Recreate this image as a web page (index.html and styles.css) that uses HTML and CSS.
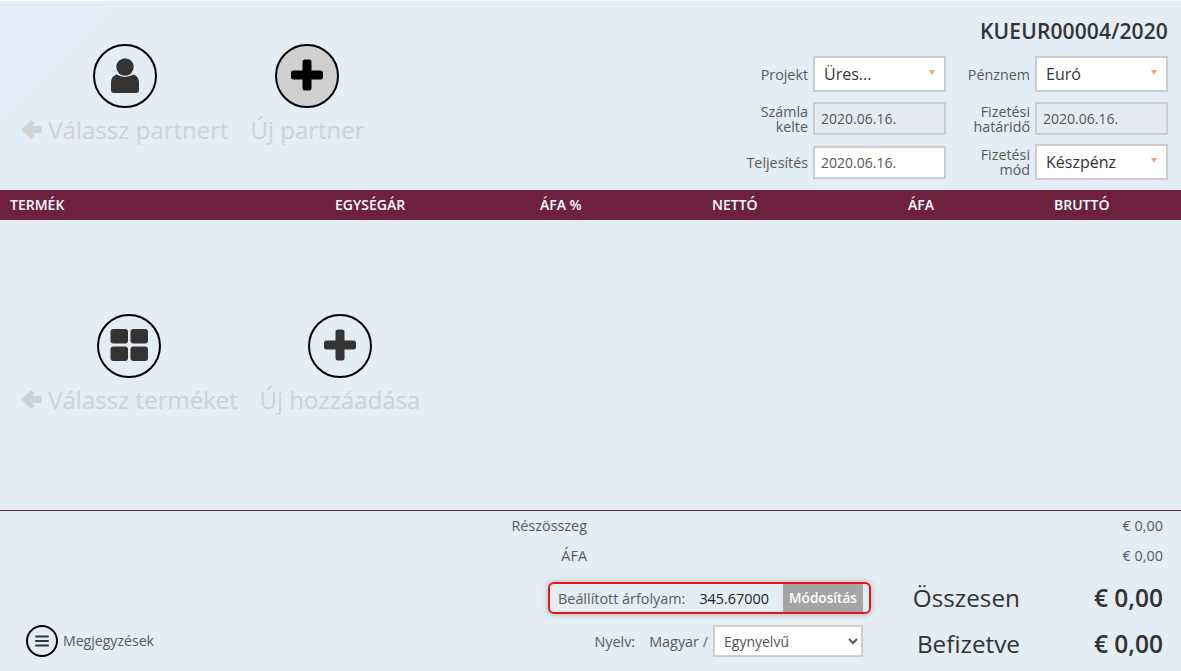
FILE: index.html
```html
<!DOCTYPE html>
<html lang="hu">
<head>
<meta charset="utf-8">
<title>KUEUR00004/2020</title>
<link rel="stylesheet" href="styles.css">
</head>
<body>
<div class="corner"></div>
<header class="head">
  <div class="actions partner-actions">
    <div class="action action-partner">
      <span class="circle">
        <svg width="30" height="36" viewBox="0 0 30 36"><circle cx="15" cy="9" r="8.700" fill="#333"/><path d="M6.500 16.600Q15 21.500 23.500 16.600Q29 18.500 29 25V32Q29 35 26 35H4Q1 35 1 32V25Q1 18.500 6.500 16.600Z" fill="#333"/></svg>
      </span>
      <span class="action-label"><svg class="arrow" width="21" height="21" viewBox="0 0 21 21"><path d="M1 10.500 10 1.500 13 4.500 9.500 7.500H20V13.500H9.500L13 16.500 10 19.500Z" fill="#d1d1d1" stroke="#d1d1d1" stroke-linejoin="round"/></svg>Válassz partnert</span>
    </div>
    <div class="action action-new">
      <span class="circle circle-grey">
        <svg class="plus" width="32" height="32" viewBox="0 0 32 32"><rect x="11.500" y="0.500" width="9" height="31" rx="2.500" fill="#000"/><rect x="0" y="11.500" width="32" height="9" rx="2.500" fill="#000"/></svg>
      </span>
      <span class="action-label">Új partner</span>
    </div>
  </div>
  <div class="doc">
    <h1 class="doc-no">KUEUR00004/2020</h1>
    <div class="form">
      <label class="lbl">Projekt</label>
      <div class="field sel"><span>Üres...</span><i class="tri"></i></div>
      <label class="lbl">Pénznem</label>
      <div class="field sel"><span>Euró</span><i class="tri"></i></div>
      <label class="lbl two">Számla kelte</label>
      <div class="field date off">2020.06.16.</div>
      <label class="lbl two">Fizetési határidő</label>
      <div class="field date off">2020.06.16.</div>
      <label class="lbl">Teljesítés</label>
      <div class="field date">2020.06.16.</div>
      <label class="lbl two">Fizetési mód</label>
      <div class="field sel"><span>Készpénz</span><i class="tri"></i></div>
    </div>
  </div>
</header>
<div class="thead">
  <span class="th">TERMÉK</span>
  <span class="th">EGYSÉGÁR</span>
  <span class="th">ÁFA %</span>
  <span class="th">NETTÓ</span>
  <span class="th">ÁFA</span>
  <span class="th">BRUTTÓ</span>
</div>
<main class="items">
  <div class="actions item-actions">
    <div class="action action-product">
      <span class="circle">
        <svg class="plus" width="38" height="32" viewBox="0 0 38 32"><rect x="0.500" y="0" width="17.500" height="14.500" rx="3" fill="#333"/><rect x="20.500" y="0" width="17.500" height="14.500" rx="3" fill="#333"/><rect x="0.500" y="17.500" width="17.500" height="14.500" rx="3" fill="#333"/><rect x="20.500" y="17.500" width="17.500" height="14.500" rx="3" fill="#333"/></svg>
      </span>
      <span class="action-label"><svg class="arrow" width="21" height="21" viewBox="0 0 21 21"><path d="M1 10.500 10 1.500 13 4.500 9.500 7.500H20V13.500H9.500L13 16.500 10 19.500Z" fill="#d1d1d1" stroke="#d1d1d1" stroke-linejoin="round"/></svg>Válassz terméket</span>
    </div>
    <div class="action action-add">
      <span class="circle">
        <svg class="plus" width="32" height="32" viewBox="0 0 32 32"><rect x="11.500" y="0.500" width="9" height="31" rx="2.500" fill="#333"/><rect x="0" y="11.500" width="32" height="9" rx="2.500" fill="#333"/></svg>
      </span>
      <span class="action-label">Új hozzáadása</span>
    </div>
  </div>
</main>
<footer class="foot">
  <div class="notes">
    <span class="notes-ico"><svg width="14" height="12" viewBox="0 0 14 12"><path d="M1 1.500H13M1 6H13M1 10.500H13" stroke="#333" stroke-width="2" stroke-linecap="round"/></svg></span>
    <span>Megjegyzések</span>
  </div>
  <div class="mid">
    <div class="sub-l">Részösszeg</div>
    <div class="sub-l">ÁFA</div>
    <div class="rate">
      <span class="rate-l">Beállított árfolyam:</span>
      <span class="rate-v">345.67000</span>
      <span class="rate-b">Módosítás</span>
    </div>
    <div class="lang">
      <span class="lang-l">Nyelv:</span>
      <span class="lang-v">Magyar /</span>
      <select class="lang-s"><option>Egynyelvű</option></select>
    </div>
  </div>
  <div class="totals">
    <div class="sub-v">€ 0,00</div>
    <div class="sub-v">€ 0,00</div>
    <div class="big big-1"><span class="big-l">Összesen</span><b class="big-v">€ 0,00</b></div>
    <div class="big"><span class="big-l">Befizetve</span><b class="big-v">€ 0,00</b></div>
  </div>
</footer>
</body>
</html>
```
FILE: styles.css
```css
* { box-sizing: border-box; }
html, body { margin: 0; height: 100%; }
body {
  position: relative;
  width: 1181px;
  height: 671px;
  overflow: hidden;
  background: #e4ecf4;
  border-top: 1px solid #fff;
  font-family: "Open Sans", sans-serif;
  color: #333;
}
.corner {
  position: absolute;
  left: 0;
  top: 0;
  width: 117px;
  height: 117px;
  background: #e6edf6;
  clip-path: polygon(0 0, 100% 0, 0 100%);
}
.head {
  position: relative;
  display: flex;
  justify-content: space-between;
  height: 189px;
}
.actions { display: flex; }
.partner-actions { padding: 43px 0 0 21px; }
.action {
  display: flex;
  flex-direction: column;
  align-items: center;
}
.action-partner { width: 208px; }
.action-new { width: 113px; margin-left: 22px; }
.action-product { width: 217px; }
.action-add { width: 160px; margin-left: 22px; }
.circle {
  display: flex;
  align-items: center;
  justify-content: center;
  width: 64px;
  height: 64px;
  border: 2px solid #000;
  border-radius: 50%;
}
.action-new .circle, .action-product .circle { margin-right: 2px; }
.circle-grey { background: #cfcfcf; }
.plus { margin-bottom: 3px; }
.action-label {
  display: flex;
  align-items: center;
  margin-top: 5px;
  font-size: 24px;
  line-height: 33px;
  color: #d1d1d1;
  white-space: nowrap;
}
.arrow { margin-right: 6px; }
.doc {
  width: 421px;
  padding: 17px 13px 0 0;
}
.doc-no {
  margin: 0 0 11px;
  font-size: 21px;
  line-height: 27px;
  font-weight: 600;
  letter-spacing: 0.13px;
  text-align: right;
}
.form {
  display: grid;
  grid-template-columns: 70px 133px 79px 133px;
  grid-template-rows: 36px 33px 34px;
  column-gap: 5px;
  row-gap: 10px;
  justify-content: end;
  align-items: center;
}
.lbl {
  font-size: 14.300px;
  line-height: 15px;
  text-align: right;
  color: #5a5a5a;
}
.two { width: 66px; justify-self: end; }
.field {
  display: flex;
  align-items: center;
  justify-content: space-between;
  background: #fff;
  border: 2px solid #ccc;
}
.sel {
  height: 36px;
  padding: 0 9px;
  font-size: 16px;
  color: #333;
}
.date {
  height: 33px;
  padding: 0 6px;
  font-size: 14px;
  color: #555;
}
.off { background: #e6ebf2; }
.tri {
  width: 0;
  height: 0;
  border-left: 3.500px solid transparent;
  border-right: 3.500px solid transparent;
  border-top: 5px solid #f5a67d;
  margin-bottom: 3px;
}
.thead {
  height: 30px;
  padding: 0 0 2px 10px;
  background: #6d213f;
  color: #fff;
  display: grid;
  grid-template-columns: 325px 205px 172px 196px 146px 1fr;
  align-items: center;
  font-size: 14px;
  font-weight: 600;
}
.th { white-space: nowrap; }
.items {
  height: 290px;
  border-bottom: 1px solid #6d213f;
  box-sizing: content-box;
}
.item-actions { padding: 94px 0 0 21px; }
.foot {
  position: relative;
  display: flex;
  height: 160px;
}
.notes {
  display: flex;
  align-items: center;
  align-self: flex-end;
  gap: 5px;
  margin: 0 0 14px 26px;
  width: 420px;
  font-size: 14.100px;
  line-height: 32px;
  color: #5a5a5a;
}
.notes-ico {
  display: flex;
  align-items: center;
  justify-content: center;
  width: 32px;
  height: 32px;
  border: 2px solid #000;
  border-radius: 50%;
}
.mid {
  width: 417px;
  display: flex;
  flex-direction: column;
  align-items: flex-end;
}
.sub-l, .sub-v {
  height: 30px;
  padding-top: 5px;
  font-size: 14.400px;
  line-height: 19px;
  color: #5a5a5a;
}
.sub-l { margin-right: 276px; }
.sub-v { text-align: right; }
.rate {
  display: flex;
  align-items: center;
  flex: none;
  width: 323px;
  height: 32px;
  margin: 11px -8px 0 0;
  padding: 0 6px 0 8px;
  border: 2px solid #f01018;
  border-radius: 6px;
  box-shadow: 0 0 6px rgba(0,0,0,.25);
  font-size: 14.400px;
}
.rate-l { color: #5a5a5a; }
.rate-v { margin-left: 14px; color: #222; font-weight: 500; }
.rate-b {
  margin-left: auto;
  width: 80px;
  height: 28px;
  line-height: 27px;
  text-align: center;
  background: #a5a5a5;
  color: #fff;
  font-weight: 600;
  font-size: 13.600px;
}
.lang {
  display: flex;
  align-items: center;
  height: 32px;
  margin-top: 11px;
  font-size: 14.400px;
  color: #5a5a5a;
}
.lang-v { margin: 0 5px 0 14px; }
.lang-s {
  width: 150px;
  height: 32px;
  padding: 0 5px;
  background: #fff;
  border: 2px solid #ccc;
  border-radius: 0;
  font: 14px "Open Sans", sans-serif;
  color: #555;
}
.totals {
  width: 300px;
  margin-left: auto;
  padding-right: 18px;
}
.big {
  display: flex;
  justify-content: space-between;
  align-items: center;
  height: 46px;
}
.big-1 { margin-top: 3px; }
.big-l {
  width: 139px;
  font-size: 24.300px;
  text-align: right;
  color: #333;
  white-space: nowrap;
}
.big-v { font-size: 24.500px; font-weight: 600; }
```
